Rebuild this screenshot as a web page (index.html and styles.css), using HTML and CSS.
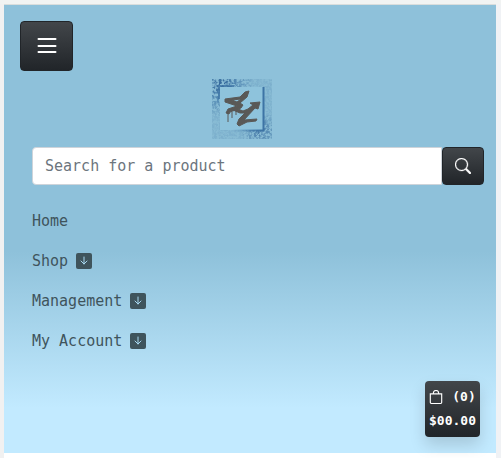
FILE: index.html
```html
<!DOCTYPE html>
<html lang="en">
<head>
<meta charset="utf-8">
<meta name="viewport" content="width=device-width, initial-scale=1">
<title>Shop</title>
<link rel="stylesheet" href="styles.css">
</head>
<body>
<header class="hero">
  <button class="btn menu-toggle" type="button" aria-label="Menu">
    <svg width="26" height="26" viewBox="0 0 26 26" fill="none" stroke="currentColor" stroke-width="2" stroke-linecap="round"><path d="M4.500 6h17M4.500 13h17M4.500 19h17"/></svg>
  </button>
  <a class="logo" href="#" aria-label="Home page">
    <svg width="60" height="60" viewBox="0 0 60 60">
      <defs>
        <filter id="spray" x="0" y="0" width="100%" height="100%">
          <feTurbulence type="fractalNoise" baseFrequency="0.4" numOctaves="3" seed="4" result="n"/>
          <feColorMatrix in="n" type="matrix" values="0 0 0 0 0  0 0 0 0 0  0 0 0 0 0  4 0 0 0 -1.5" result="m"/>
          <feComposite in="SourceGraphic" in2="m" operator="in"/>
          <feGaussianBlur stdDeviation=".4"/>
        </filter>
        <radialGradient id="a" gradientUnits="userSpaceOnUse" cx="10" cy="6" r="32"><stop offset="0" stop-color="#2f6296"/><stop offset=".35" stop-color="#3d74a5" stop-opacity=".8"/><stop offset="1" stop-color="#3d74a5" stop-opacity=".15"/></radialGradient>
        <radialGradient id="b" gradientUnits="userSpaceOnUse" cx="48" cy="52" r="20"><stop offset="0" stop-color="#35699c" stop-opacity=".8"/><stop offset="1" stop-color="#35699c" stop-opacity="0"/></radialGradient>
        <linearGradient id="c" gradientUnits="userSpaceOnUse" x1="20" y1="0" x2="50" y2="0"><stop offset="0" stop-color="#3d74a5" stop-opacity="0"/><stop offset="1" stop-color="#3d74a5"/></linearGradient>
      </defs>
      <rect width="60" height="60" fill="#83b8d0" opacity=".6"/>
      <g filter="url(#spray)"><rect width="60" height="60" fill="url(#a)"/><rect width="60" height="60" fill="url(#b)"/></g>
      <path d="M7 20V7H22" fill="none" stroke="#3d74a5" stroke-width="2" opacity=".8"/>
      <rect x="8" y="8" width="43" height="43" fill="#8ec3dc"/>
      <path d="M8 51.500H51.500V8" fill="none" stroke="url(#c)" stroke-width="2"/>
      <g fill="#595957" stroke="#595957" stroke-width="1" stroke-linejoin="round">
        <path d="M37 12 35 18 28 24 31 26 29 29 18 33 17 35 14 34 16 30 25 27 13 23 13 20 28 18 33 13ZM29 20 20 21 25 23Z" fill-rule="evenodd"/>
        <path d="M21 31 26 30 31 32 36 30 41 26 38 24 48 23 46 30 43 29 32 41 45 40 44 42 35 43 27 47 25 45 27 40 33 34 28 34Z"/>
        <path fill="none" d="M16 34v9M20 33v6M24 32v4"/>
      </g>
    </svg>
  </a>
  <form class="search" role="search">
    <input class="search-input" type="search" aria-label="Search for a product" placeholder="Search for a product">
    <button class="btn search-btn" type="button" aria-label="Search">
      <svg width="16" height="16" viewBox="0 0 16 16" fill="currentColor" stroke="currentColor" stroke-width=".3"><path d="M11.742 10.344a6.5 6.5 0 1 0-1.397 1.398h-.001q.044.06.098.115l3.85 3.85a1 1 0 0 0 1.415-1.414l-3.85-3.85a1 1 0 0 0-.115-.1zM12 6.5a5.5 5.5 0 1 1-11 0 5.5 5.5 0 0 1 11 0"/></svg>
    </button>
  </form>
  <nav class="nav">
    <a href="#">Home</a>
    <a href="#">Shop <svg width="16" height="16" viewBox="0 0 16 16"><rect width="16" height="16" rx="2" fill="currentColor"/><path class="arrow" d="M8 4v7M5 8l3 3 3-3"/></svg></a>
    <a href="#">Management <svg width="16" height="16" viewBox="0 0 16 16"><rect width="16" height="16" rx="2" fill="currentColor"/><path class="arrow" d="M8 4v7M5 8l3 3 3-3"/></svg></a>
    <a href="#">My Account <svg width="16" height="16" viewBox="0 0 16 16"><rect width="16" height="16" rx="2" fill="currentColor"/><path class="arrow" d="M8 4v7M5 8l3 3 3-3"/></svg></a>
  </nav>
  <button class="btn cart" type="button">
    <span class="cart-count"><svg width="14" height="14" viewBox="0 0 16 16" fill="none" stroke="currentColor" stroke-width="1.3"><path d="M1.500 4.500h13V14a1.500 1.500 0 0 1-1.500 1.500H3A1.500 1.500 0 0 1 1.500 14zM5 4.500V3.500a3 3 0 0 1 6 0v1"/></svg>(0)</span>
    <span>$00.00</span>
  </button>
</header>
</body>
</html>
```
FILE: styles.css
```css
* { box-sizing: border-box; }

html {
  background: linear-gradient(to right, #f1f1f1 4px, #fff 4px, #fff calc(100% - 5px), #f0f2f5 calc(100% - 5px));
}

body {
  margin: 0;
  padding: 0 5px 5px 4px;
  border-top: 4px solid #f1f3f2;
  font-family: "DejaVu Sans Mono", "Liberation Mono", monospace;
  font-size: 15px;
  line-height: 24px;
}

.hero {
  position: relative;
  display: flex;
  flex-direction: column;
  padding: 16px 12px;
  border-top: 1px solid #d9dddc;
  background: linear-gradient(#8ec1da 0%, #8ec1da 55%, #c2eaff 90%);
}

.btn {
  display: flex;
  align-items: center;
  justify-content: center;
  border: 1px solid #212529;
  border-radius: 4px;
  background: linear-gradient(#42464a, #212529);
  color: #fff;
  font: inherit;
}

.menu-toggle {
  align-self: flex-start;
  width: 53px;
  height: 50px;
  margin-left: 4px;
}

.logo {
  align-self: center;
  margin: 8px 16px 8px 0;
}

.logo svg { display: block; }

.search {
  display: flex;
  margin-left: 16px;
}

.search-input {
  flex: 1;
  min-width: 0;
  height: 38px;
  padding: 0 12px;
  border: 1px solid #ced4da;
  border-radius: 4px 0 0 4px;
  background: #fff;
  color: #212529;
  font: inherit;
}

.search-input::placeholder { color: #6c757d; opacity: 1; }

.search-btn { width: 42px; }

.nav {
  display: flex;
  flex-direction: column;
  align-items: flex-start;
  padding: 16px 16px 76px;
}

.nav a {
  display: flex;
  align-items: center;
  gap: 8px;
  padding: 8px 0;
  color: #3f545c;
  text-decoration: none;
}

.arrow {
  fill: none;
  stroke: #a8d8f0;
  stroke-width: 1px;
  stroke-linecap: round;
  stroke-linejoin: round;
}

.cart {
  position: absolute;
  right: 16px;
  bottom: 16px;
  flex-direction: column;
  padding: 4px;
  border: 0;
  font-size: 13px;
  font-weight: bold;
  line-height: 24px;
  box-shadow: 0 8px 16px rgba(0, 0, 0, .15);
}

.cart-count {
  display: flex;
  align-items: center;
  gap: 9px;
}
```
